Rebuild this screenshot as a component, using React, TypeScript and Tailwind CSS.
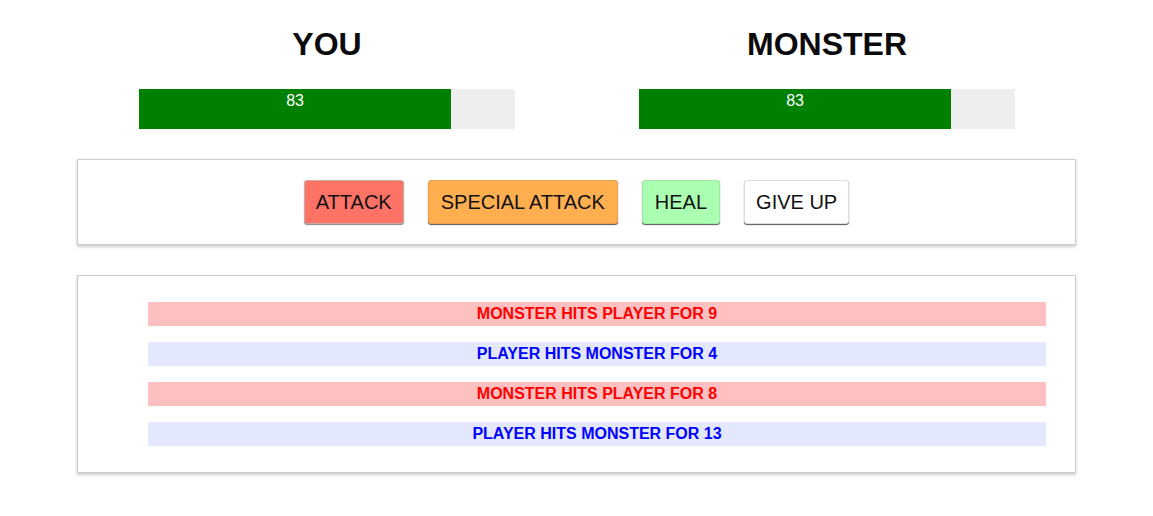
import React from 'react';

const logs = [
  { player: false, text: 'MONSTER HITS PLAYER FOR 9' },
  { player: true, text: 'PLAYER HITS MONSTER FOR 4' },
  { player: false, text: 'MONSTER HITS PLAYER FOR 8' },
  { player: true, text: 'PLAYER HITS MONSTER FOR 13' },
];

function Fighter({ name, health }: { name: string; health: number }) {
  return (
    <div className="w-[500px] px-[15px] flex flex-col items-center">
      <h1 className="text-[32px] font-bold leading-none mt-[28px] text-[#0a0a0a]">{name}</h1>
      <div className="w-[376px] h-[40px] bg-[#eeeeee] mt-[29px]">
        <div
          className="h-full bg-[#008000] text-white text-[16px] leading-[23px] text-center"
          style={{ width: `${health}%` }}
        >
          {health}
        </div>
      </div>
    </div>
  );
}

export default function App() {
  return (
    <div className="w-[1153px] h-[516px] bg-white font-['Liberation_Sans',Arial,sans-serif]">
      <div className="w-[1000px] ml-[77px]">
        <div className="flex">
          <Fighter name="YOU" health={83} />
          <Fighter name="MONSTER" health={83} />
        </div>

        <div className="mt-[30px] w-[999px] h-[86px] border border-[#cccccc] shadow-[0_2px_3px_#cccccc] flex items-center justify-center gap-[24px]">
          <button className="h-[44px] px-[11px] text-[20px] text-[#111] bg-[#ff7367] border border-[#c8a8a4] rounded-[3px] shadow-[0_1px_1px_#888]">
            ATTACK
          </button>
          <button className="h-[44px] px-[12px] text-[20px] text-[#111] bg-[#ffaf4f] border border-[#e8a050] rounded-[3px] shadow-[0_1px_1px_#555]">
            SPECIAL ATTACK
          </button>
          <button className="h-[44px] px-[12px] text-[20px] text-[#111] bg-[#aaffb0] border border-[#a0e8a6] rounded-[3px] shadow-[0_1px_1px_#555]">
            HEAL
          </button>
          <button className="h-[44px] px-[11px] text-[20px] text-[#111] bg-white border border-[#dddddd] rounded-[3px] shadow-[0_1px_1px_#555]">
            GIVE UP
          </button>
        </div>

        <div className="mt-[30px] w-[999px] border border-[#cccccc] shadow-[0_2px_3px_#cccccc] pt-[26px] pb-[26px] pl-[70px] flex flex-col items-start gap-[16px]">
          {logs.map((l, i) => (
            <div
              key={i}
              className={`w-[898px] h-[24px] leading-[24px] text-center text-[16px] font-bold ${
                l.player ? 'bg-[#e4e8ff] text-[#0000ff]' : 'bg-[#ffc0c1] text-[#ff0000]'
              }`}
            >
              {l.text}
            </div>
          ))}
        </div>
      </div>
    </div>
  );
}
